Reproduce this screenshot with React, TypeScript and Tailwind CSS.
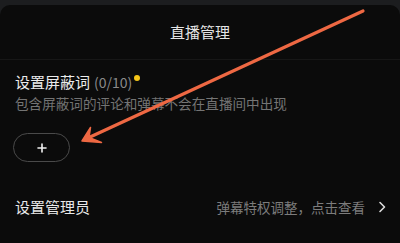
import React from 'react'

const App: React.FC = () => {
  return (
    <div
      className="relative w-[400px] h-[243px] overflow-hidden bg-[#1c1d1f]"
      style={{ fontFamily: '"Noto Sans CJK SC", "Noto Sans", sans-serif' }}
    >
      <div className="mt-[5px] h-[238px] rounded-t-[10px] bg-[#0b0b0b]">
        {/* Header */}
        <div className="h-[55px] flex items-center justify-center border-b border-[#171717] text-[15px] text-[#e4e4e4]">
          直播管理
        </div>

        {/* Blocked words */}
        <div className="px-[15px] pt-[14px]">
          <div className="flex items-center leading-[16px]">
            <span className="text-[15px] text-[#ececec]">设置屏蔽词</span>
            <span className="ml-[4px] text-[14px] text-[#8a8a8a]">(0/10)</span>
            <span className="ml-[2px] mb-[8px] w-[6px] h-[6px] rounded-full bg-[#f5c518]" />
          </div>
          <div className="mt-[5px] leading-[16px] text-[13.6px] text-[#747474]">
            包含屏蔽词的评论和弹幕不会在直播间中出现
          </div>
          <button className="mt-[22px] -ml-[2px] w-[57px] h-[29px] rounded-full border border-[#4a4a4a] flex items-center justify-center text-[#f0f0f0]">
            <svg width="10" height="10" viewBox="0 0 10 10">
              <path d="M5 1v8M1 5h8" stroke="currentColor" strokeWidth="1.6" strokeLinecap="round" />
            </svg>
          </button>
        </div>

        {/* Admin row */}
        <div className="mt-[25px] h-[40px] pl-[15px] pr-[14px] flex items-center justify-between">
          <span className="text-[15px] text-[#e8e8e8]">设置管理员</span>
          <div className="flex items-center text-[#7c7c7c]">
            <span className="text-[13.5px]">弹幕特权调整，点击查看</span>
            <svg className="ml-[13px] text-[#dcdcdc]" width="8" height="12" viewBox="0 0 8 12">
              <path d="M2 1.5l4.5 4.5L2 10.5" fill="none" stroke="currentColor" strokeWidth="1.6" strokeLinecap="round" strokeLinejoin="round" />
            </svg>
          </div>
        </div>
      </div>

      {/* Annotation arrow */}
      <svg className="absolute inset-0 pointer-events-none" width="400" height="243" viewBox="0 0 400 243">
        <line x1="363" y1="11" x2="89" y2="137.5" stroke="#ee6843" strokeWidth="3.2" strokeLinecap="round" />
        <polygon points="82,141 90.5,127.5 89,137.5 101.5,142.5" fill="#ee6843" stroke="#ee6843" strokeWidth="1.5" strokeLinejoin="round" />
      </svg>
    </div>
  )
}

export default App
